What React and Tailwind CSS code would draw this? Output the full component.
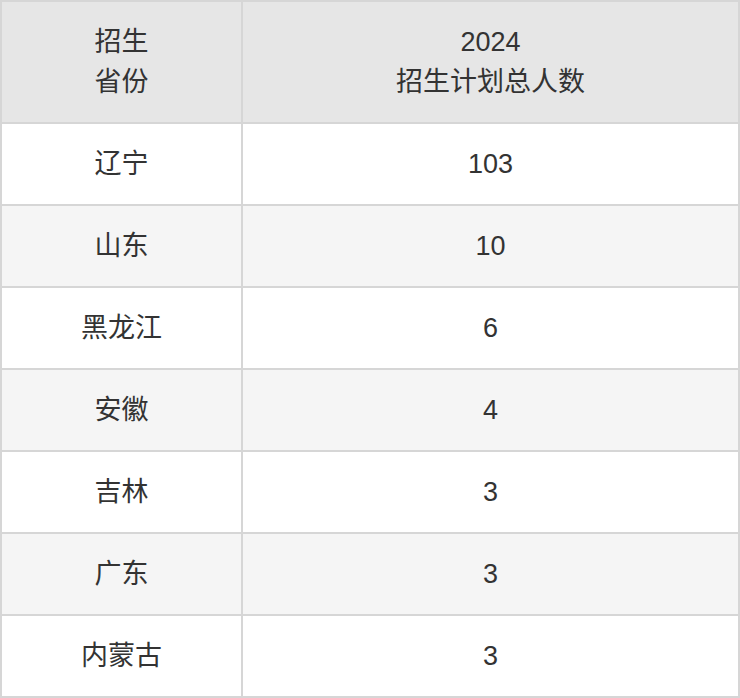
import React from "react";

const rows = [
  ["辽宁", "103"],
  ["山东", "10"],
  ["黑龙江", "6"],
  ["安徽", "4"],
  ["吉林", "3"],
  ["广东", "3"],
  ["内蒙古", "3"],
];

export default function App() {
  return (
    <div
      className="w-[740px] h-[698px] bg-white text-[#333] text-[27px]"
      style={{ fontFamily: '"Liberation Sans", "Noto Sans CJK SC", sans-serif' }}
    >
      <div className="grid grid-cols-[239px_1fr] gap-[2px] p-[2px] bg-[#d6d6d6]">
        <div className="h-[120px] bg-[#e6e6e6] flex flex-col items-center justify-center leading-[40px]">
          <span>招生</span>
          <span>省份</span>
        </div>
        <div className="h-[120px] bg-[#e6e6e6] flex flex-col items-center justify-center leading-[40px]">
          <span>2024</span>
          <span>招生计划总人数</span>
        </div>
        {rows.map(([prov, num], i) => {
          const bg = i % 2 === 0 ? "bg-white" : "bg-[#f5f5f5]";
          return (
            <React.Fragment key={prov}>
              <div className={`h-[80px] flex items-center justify-center ${bg}`}>{prov}</div>
              <div className={`h-[80px] flex items-center justify-center ${bg}`}>{num}</div>
            </React.Fragment>
          );
        })}
      </div>
    </div>
  );
}
